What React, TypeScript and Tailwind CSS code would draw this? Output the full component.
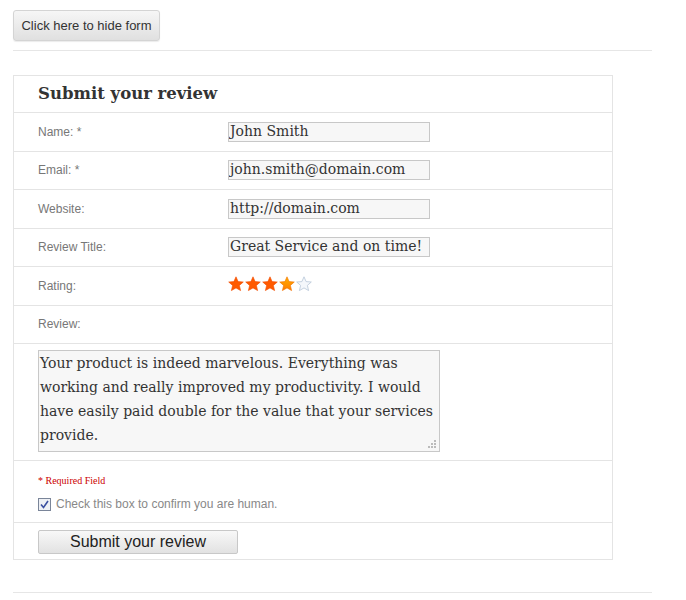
import React from "react";

const serif = { fontFamily: "'DejaVu Serif', Georgia, serif" };

function Star({ fill }: { fill: "full" | "half" | "empty" }) {
  const path =
    "M8 0.8 L10.1 5.6 L15.3 6 L11.4 9.4 L12.6 14.6 L8 11.9 L3.4 14.6 L4.6 9.4 L0.7 6 L5.9 5.6 Z";
  if (fill === "full")
    return (
      <svg width="16" height="16" viewBox="0 0 16 16">
        <path d={path} fill="#ff5a00" stroke="#f04c00" strokeWidth="0.6" />
      </svg>
    );
  if (fill === "half")
    return (
      <svg width="16" height="16" viewBox="0 0 16 16">
        <defs>
          <linearGradient id="hg" x1="0" y1="0" x2="0" y2="1">
            <stop offset="0" stopColor="#ffb000" />
            <stop offset="1" stopColor="#ff7a00" />
          </linearGradient>
        </defs>
        <path d={path} fill="url(#hg)" stroke="#f07000" strokeWidth="0.6" />
      </svg>
    );
  return (
    <svg width="16" height="16" viewBox="0 0 16 16">
      <path d={path} fill="#f4f7fb" stroke="#b8c6d8" strokeWidth="0.8" />
    </svg>
  );
}

function Row({ label, children }: { label: string; children?: React.ReactNode }) {
  return (
    <div className="flex h-[38.5px] items-center border-t border-[#e4e4e4] pl-[24px]">
      <div className="w-[190px] text-[12px] text-[#777]" style={{ fontFamily: "'Liberation Sans', Arial, sans-serif" }}>
        {label}
      </div>
      <div className="flex items-center">{children}</div>
    </div>
  );
}

function Field({ value }: { value: string }) {
  return (
    <div
      className="h-[20px] w-[202px] overflow-hidden whitespace-nowrap border border-[#c8c8c8] bg-[#f7f7f7] pl-[1px] text-[14px] leading-[17px] text-[#333]"
      style={serif}
    >
      {value}
    </div>
  );
}

export default function App() {
  const sans = { fontFamily: "'Liberation Sans', Arial, sans-serif" };
  return (
    <div className="min-h-[600px] bg-white pt-[10px]" style={sans}>
      <div className="pl-[13px]">
        <button className="h-[31px] w-[147px] rounded-[3px] border border-[#d4d4d4] bg-gradient-to-b from-[#f6f6f6] to-[#e0e0e0] text-[13px] text-[#333] shadow-[0_1px_1px_rgba(0,0,0,0.08)]">
          Click here to hide form
        </button>
      </div>
      <div className="ml-[13px] mt-[9px] w-[639px] border-t border-[#e6e6e6]" />
      <div className="ml-[13px] mt-[24px] w-[600px] border border-[#e4e4e4]">
        <div className="flex h-[36px] items-center pl-[24px] text-[16.5px] font-bold text-[#333]" style={serif}>
          Submit your review
        </div>
        <Row label="Name: *">
          <Field value="John Smith" />
        </Row>
        <Row label="Email: *">
          <Field value="john.smith@domain.com" />
        </Row>
        <Row label="Website:">
          <Field value="http://domain.com" />
        </Row>
        <Row label="Review Title:">
          <Field value="Great Service and on time!" />
        </Row>
        <Row label="Rating:">
          <div className="-mt-[4px] flex gap-[1px]">
            <Star fill="full" />
            <Star fill="full" />
            <Star fill="full" />
            <Star fill="half" />
            <Star fill="empty" />
          </div>
        </Row>
        <Row label="Review:" />
        <div className="h-[117px] border-t border-[#e4e4e4] pl-[24px] pt-[6px]">
          <div
            className="relative h-[102px] w-[402px] border border-[#c8c8c8] bg-[#f7f7f7] px-[1px] text-[14px] leading-[24px] text-[#333]"
            style={serif}
          >
            Your product is indeed marvelous. Everything was working and really improved my productivity. I would
            have easily paid double for the value that your services provide.
            <svg className="absolute bottom-[2px] right-[2px]" width="10" height="10" viewBox="0 0 10 10">
              <rect x="7" y="1" width="2" height="2" fill="#bbb" />
              <rect x="4" y="4" width="2" height="2" fill="#bbb" />
              <rect x="7" y="4" width="2" height="2" fill="#bbb" />
              <rect x="1" y="7" width="2" height="2" fill="#bbb" />
              <rect x="4" y="7" width="2" height="2" fill="#bbb" />
              <rect x="7" y="7" width="2" height="2" fill="#bbb" />
            </svg>
          </div>
        </div>
        <div className="h-[62px] border-t border-[#e4e4e4] pl-[24px] pt-[13px]">
          <div className="text-[10px] leading-[14px] text-[#c00]" style={{ fontFamily: "'Liberation Serif', Georgia, serif" }}>
            * Required Field
          </div>
          <div className="mt-[7px] flex items-center gap-[5px]">
            <div className="flex h-[13px] w-[13px] items-center justify-center border border-[#7a8599] bg-[#eef0f5]">
              <svg width="9" height="9" viewBox="0 0 9 9">
                <path d="M1 4.5 L3.5 7.5 L8 1" fill="none" stroke="#3a4fa0" strokeWidth="1.6" />
              </svg>
            </div>
            <span className="text-[12px] text-[#888]">Check this box to confirm you are human.</span>
          </div>
        </div>
        <div className="h-[37px] border-t border-[#e4e4e4] pl-[24px] pt-[7px]">
          <button className="h-[24px] w-[200px] rounded-[2px] border border-[#c8c8c8] bg-gradient-to-b from-[#f8f8f8] to-[#e2e2e2] text-[16px] leading-[20px] text-[#222]">
            Submit your review
          </button>
        </div>
      </div>
      <div className="ml-[13px] mt-[32px] w-[639px] border-t border-[#e6e6e6]" />
    </div>
  );
}
